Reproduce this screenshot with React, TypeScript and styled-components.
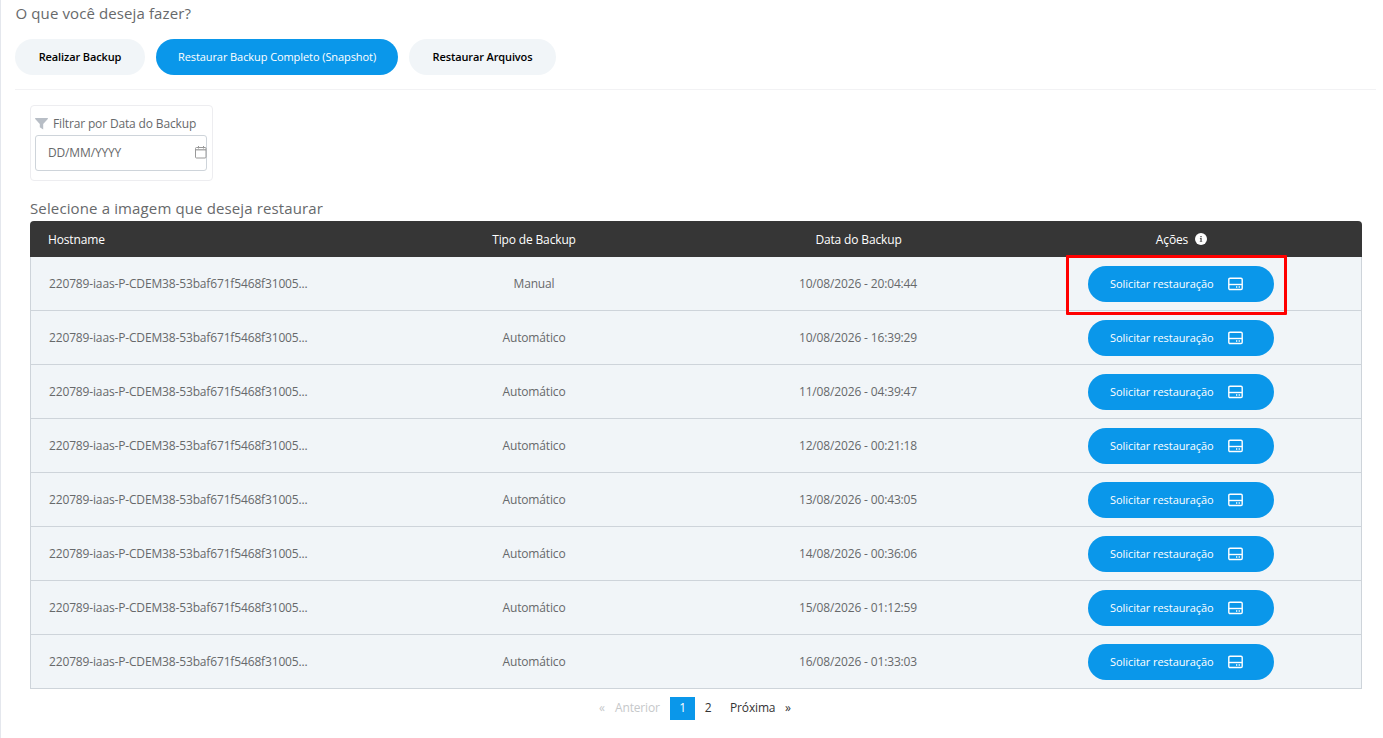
import React from 'react';
import styled, { createGlobalStyle } from 'styled-components';

const Global = createGlobalStyle`
  * { box-sizing: border-box; }
  body { margin: 0; background: #fff; font-family: 'Open Sans', 'Noto Sans', sans-serif; font-size: 12px; letter-spacing: -0.15px; color: #67696b; overflow: hidden; }
  button, input { font-family: inherit; }
`;

const Page = styled.main`
  height: 738px;
  padding: 3px 7px 0 14px;
  border-left: 1px solid #e4e7ed;
`;

const Title = styled.h1`
  margin: 0;
  padding-left: 0.5px;
  font-size: 15px;
  line-height: 21px;
  font-weight: 400;
  letter-spacing: 0.11px;
`;

const Tabs = styled.nav`
  display: flex;
  gap: 11px;
  margin-top: 15px;
  padding-bottom: 14px;
  border-bottom: 1px solid #f2f2f4;
`;

const Tab = styled.button<{ $width: number; $active?: boolean }>`
  width: ${p => p.$width}px;
  height: 36px;
  padding: 0 0 2px;
  border: 0;
  border-radius: 18px;
  font-size: 11px;
  font-weight: ${p => (p.$active ? 400 : 600)};
  letter-spacing: ${p => (p.$active ? -0.08 : -0.12)}px;
  color: ${p => (p.$active ? '#fff' : '#000')};
  background: ${p => (p.$active ? '#0a97ea' : '#f1f5f8')};
`;

const Content = styled.section`
  padding: 15px 14px 0 15px;
`;

const Filter = styled.div`
  width: 183px;
  height: 76px;
  padding: 9px 5px 0 4px;
  border: 1px solid #ededf0;
  border-radius: 4px;
`;

const FilterLabel = styled.label`
  display: flex;
  align-items: center;
  gap: 5px;
  height: 20px;
  padding-bottom: 3px;
`;

const DateField = styled.div`
  display: flex;
  align-items: center;
  justify-content: space-between;
  width: 172px;
  height: 36px;
  padding: 0 0 2px 12px;
  border: 1px solid #ced4da;
  border-radius: 3px;
`;

const Subtitle = styled.h2`
  margin: 17px 0 2px;
  font-size: 15px;
  line-height: 21px;
  font-weight: 400;
  letter-spacing: 0.13px;
`;

const Columns = styled.div`
  display: grid;
  grid-template-columns: 322px 363px 285px 362px;
  align-items: center;
`;

const Head = styled(Columns)`
  height: 36px;
  grid-template-columns: 322px 364px 285px 361px;
  border-radius: 4px 4px 0 0;
  background: #363636;
  color: #fff;
`;

const Row = styled(Columns)`
  height: 54px;
  border: solid #ced4da;
  border-width: 0 1px 1px;
  grid-template-columns: 321px 364px 284px 361px;
  background: #f1f5f8;
`;

const Cell = styled.div<{ $left?: boolean }>`
  display: flex;
  align-items: center;
  justify-content: ${p => (p.$left ? 'flex-start' : 'center')};
  padding-left: ${p => (p.$left ? 18 : 0)}px;
  gap: 7px;
  white-space: nowrap;
`;

const Restore = styled.button`
  position: relative;
  display: flex;
  align-items: center;
  justify-content: space-between;
  width: 186px;
  height: 36px;
  padding: 0 31px 0 22.5px;
  border: 0;
  border-radius: 18px;
  background: #0a97ea;
  color: #fff;
  font-size: 11px;
  letter-spacing: -0.06px;
`;

const Highlight = styled.span`
  position: absolute;
  inset: -11px -13px -13px -22px;
  border: 3px solid #f00;
  border-radius: 1px;
`;

const Pagination = styled.nav`
  display: flex;
  align-items: center;
  height: 23px;
  margin: 8px 0 0 569px;
`;

const PageItem = styled.span<{ $width: number; $active?: boolean; $disabled?: boolean; $center?: boolean }>`
  width: ${p => p.$width}px;
  height: 23px;
  line-height: 21px;
  text-align: ${p => (p.$center ? 'center' : 'left')};
  color: ${p => (p.$active ? '#fff' : p.$disabled ? '#c6c8ca' : '#333')};
  background: ${p => (p.$active ? '#0a97ea' : 'transparent')};
`;

const NextGroup = styled.div`
  display: flex;
  margin-left: 9px;
`;

const FunnelIcon = () => (
  <svg width="13" height="12" viewBox="0 0 13 12" fill="#b8bec6">
    <path d="M.5 0h12c.5 0 .6.5.3.9L8.2 6v5.5L4.8 9.2V6L.2.9C-.1.5 0 0 .5 0Z" />
  </svg>
);

const CalendarSvg = styled.svg`
  flex: none;
  margin-right: -1px;
`;

const CalendarIcon = () => (
  <CalendarSvg width="12" height="13" viewBox="0 0 12 13" fill="none" stroke="#999">
    <rect x=".5" y="1.5" width="10.5" height="10.5" rx="1" />
    <path d="M.5 3.8H11" strokeWidth="1.2" />
    <path d="M3.5 0v2.5M8.5 0v2.5" />
  </CalendarSvg>
);

const InfoIcon = () => (
  <svg width="12" height="12" viewBox="0 0 12 12">
    <circle cx="6" cy="6" r="6" fill="#fff" />
    <path d="M5.3 2.9h1.4v1.3H5.3zM4.9 5.1h1.8v2.8h.5v.9H4.8v-.9h.6V6h-.5z" fill="#555" />
  </svg>
);

const DriveIcon = () => (
  <svg width="15" height="14" viewBox="0 0 15 14" fill="none" stroke="#fff" strokeWidth="1.4">
    <rect x=".8" y="1.2" width="13.4" height="11.3" rx="1.2" />
    <path d="M.8 7.5h13.4" />
    <path d="M8 10h1.3M10.6 10h1.3" strokeWidth="1.3" />
  </svg>
);

const backups = [
  ['Manual', '10/08/2026 - 20:04:44'],
  ['Automático', '10/08/2026 - 16:39:29'],
  ['Automático', '11/08/2026 - 04:39:47'],
  ['Automático', '12/08/2026 - 00:21:18'],
  ['Automático', '13/08/2026 - 00:43:05'],
  ['Automático', '14/08/2026 - 00:36:06'],
  ['Automático', '15/08/2026 - 01:12:59'],
  ['Automático', '16/08/2026 - 01:33:03'],
];

export default function App() {
  return (
    <Page>
      <Global />
      <Title>O que você deseja fazer?</Title>
      <Tabs>
        <Tab $width={130}>Realizar Backup</Tab>
        <Tab $width={242} $active>Restaurar Backup Completo (Snapshot)</Tab>
        <Tab $width={147}>Restaurar Arquivos</Tab>
      </Tabs>
      <Content>
        <Filter>
          <FilterLabel><FunnelIcon /><span>Filtrar por Data do Backup</span></FilterLabel>
          <DateField><span>DD/MM/YYYY</span><CalendarIcon /></DateField>
        </Filter>
        <Subtitle>Selecione a imagem que deseja restaurar</Subtitle>
        <Head>
          <Cell $left>Hostname</Cell>
          <Cell>Tipo de Backup</Cell>
          <Cell>Data do Backup</Cell>
          <Cell>Ações<InfoIcon /></Cell>
        </Head>
        {backups.map(([type, date], i) => (
          <Row key={date}>
            <Cell $left>220789-iaas-P-CDEM38-53baf671f5468f31005...</Cell>
            <Cell>{type}</Cell>
            <Cell>{date}</Cell>
            <Cell>
              <Restore>
                <span>Solicitar restauração</span>
                <DriveIcon />
                {i === 0 && <Highlight />}
              </Restore>
            </Cell>
          </Row>
        ))}
        <Pagination>
          <PageItem $width={16} $disabled>«</PageItem>
          <PageItem $width={55} $disabled>Anterior</PageItem>
          <PageItem $width={25} $active $center>1</PageItem>
          <PageItem $width={26} $center>2</PageItem>
          <NextGroup>
            <PageItem $width={55}>Próxima</PageItem>
            <PageItem $width={10}>»</PageItem>
          </NextGroup>
        </Pagination>
      </Content>
    </Page>
  );
}
